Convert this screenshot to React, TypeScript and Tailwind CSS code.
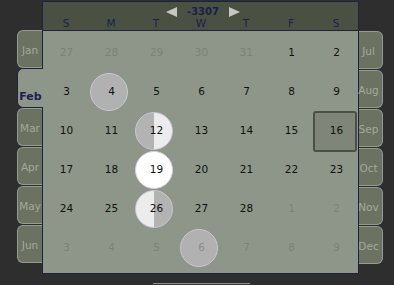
import React from "react";

type Mark = "none" | "gray" | "halfL" | "halfR" | "white" | "square";
type Cell = { n: number; other?: boolean; mark?: Mark };

const rows: Cell[][] = [
  [{ n: 27, other: true }, { n: 28, other: true }, { n: 29, other: true }, { n: 30, other: true }, { n: 31, other: true }, { n: 1 }, { n: 2 }],
  [{ n: 3 }, { n: 4, mark: "gray" }, { n: 5 }, { n: 6 }, { n: 7 }, { n: 8 }, { n: 9 }],
  [{ n: 10 }, { n: 11 }, { n: 12, mark: "halfL" }, { n: 13 }, { n: 14 }, { n: 15 }, { n: 16, mark: "square" }],
  [{ n: 17 }, { n: 18 }, { n: 19, mark: "white" }, { n: 20 }, { n: 21 }, { n: 22 }, { n: 23 }],
  [{ n: 24 }, { n: 25 }, { n: 26, mark: "halfR" }, { n: 27 }, { n: 28 }, { n: 1, other: true }, { n: 2, other: true }],
  [{ n: 3, other: true }, { n: 4, other: true }, { n: 5, other: true }, { n: 6, other: true, mark: "gray" }, { n: 7, other: true }, { n: 8, other: true }, { n: 9, other: true }],
];

const days = ["S", "M", "T", "W", "T", "F", "S"];
const leftMonths = ["Jan", "Feb", "Mar", "Apr", "May", "Jun"];
const rightMonths = ["Jul", "Aug", "Sep", "Oct", "Nov", "Dec"];

function DayCell({ c }: { c: Cell }) {
  const m = c.mark ?? "none";
  return (
    <div className="relative h-[39px] flex items-center justify-center">
      {m === "gray" && (
        <div className="absolute left-[2px] top-[1px] w-[38px] h-[38px] rounded-full bg-[#b1b1b1] border border-[#cac7d6]" />
      )}
      {m === "white" && (
        <div className="absolute left-[2px] top-[1px] w-[38px] h-[38px] rounded-full bg-white border border-[#d6d3e0]" />
      )}
      {m === "halfL" && (
        <div className="absolute left-[2px] top-[1px] w-[38px] h-[38px] rounded-full bg-[linear-gradient(to_right,#b3b3b3_50%,#ececec_50%)] border border-[#cac7d6]" />
      )}
      {m === "halfR" && (
        <div className="absolute left-[2px] top-[1px] w-[38px] h-[38px] rounded-full bg-[linear-gradient(to_right,#ececec_50%,#b3b3b3_50%)] border border-[#cac7d6]" />
      )}
      {m === "square" && (
        <div className="absolute left-[0px] top-[0px] w-[44px] h-[41px] rounded-[3px] bg-[#7f8679] border-2 border-[#4a5044]" />
      )}
      <span
        className={
          "relative z-10 text-[10.5px] leading-none pl-[2px] " +
          (c.other ? (m === "gray" ? "text-[#8c8c8c]" : "text-[#7b8277]") : "text-[#101010]")
        }
      >
        {c.n}
      </span>
    </div>
  );
}

export default function App() {
  return (
    <div
      className="w-[394px] h-[285px] bg-[#2e2e2e] overflow-hidden pt-[1px]"
      style={{ fontFamily: '"DejaVu Sans", Verdana, sans-serif' }}
    >
      <div className="flex items-start pl-[17px]">
        {/* left month tabs */}
        <div className="relative z-10 w-[26px] -mr-[1px] mt-[29px] flex flex-col gap-[1px]">
          {leftMonths.map((mo) =>
            mo === "Feb" ? (
              <div
                key={mo}
                className="w-[26px] h-[40px] -my-[1px] bg-[#8e9689] border border-r-0 border-[#1d2240] rounded-l-[6px] flex items-end justify-center pb-[5px]"
              >
                <span className="text-[11px] font-bold text-[#1a2050] leading-none">{mo}</span>
              </div>
            ) : (
              <div
                key={mo}
                className="w-[25px] h-[38px] bg-[#6b7262] border border-r-0 border-[#959b8e] rounded-l-[6px] flex items-center justify-center pt-[2px]"
              >
                <span className="text-[10.5px] text-[#a4a99c] leading-none">{mo}</span>
              </div>
            )
          )}
        </div>

        {/* main panel */}
        <div className="w-[317px] border border-[#1d2240] bg-[#8e9689]">
          <div className="bg-[#4a5143] border-b border-[#1d2240] pt-[3px] pb-[1px]">
            <div className="h-[13px] flex items-center justify-center gap-[10px] pl-[5px]">
              <svg width="11" height="10" viewBox="0 0 11 10">
                <polygon points="0,5 11,0 11,10" fill="#c6c6c6" />
              </svg>
              <span className="text-[10px] font-bold text-[#1a1f4a] leading-none">-3307</span>
              <svg width="11" height="10" viewBox="0 0 11 10">
                <polygon points="11,5 0,0 0,10" fill="#c6c6c6" />
              </svg>
            </div>
            <div className="grid grid-cols-7 h-[11px]">
              {days.map((d, i) => (
                <div key={i} className="flex items-center justify-center text-[10.5px] leading-none text-[#1a2050] pl-[1px]">
                  {d}
                </div>
              ))}
            </div>
          </div>
          <div className="pt-[2px] pb-[6px]">
            {rows.map((r, i) => (
              <div key={i} className="grid grid-cols-7">
                {r.map((c, j) => (
                  <DayCell key={j} c={c} />
                ))}
              </div>
            ))}
          </div>
        </div>

        {/* right month tabs */}
        <div className="w-[24px] mt-[30px] flex flex-col gap-[1px]">
          {rightMonths.map((mo) => (
            <div
              key={mo}
              className="w-[24px] h-[38px] bg-[#6b7262] border border-l-0 border-[#959b8e] rounded-r-[6px] flex items-center justify-center pr-[4px] pt-[2px]"
            >
              <span className="text-[10.5px] text-[#a4a99c] leading-none">{mo}</span>
            </div>
          ))}
        </div>
      </div>
      <div className="ml-[153px] mt-[9px] w-[97px] h-[10px] border-t border-[#8a8a8a] bg-[#3a3a3a]" />
    </div>
  );
}
